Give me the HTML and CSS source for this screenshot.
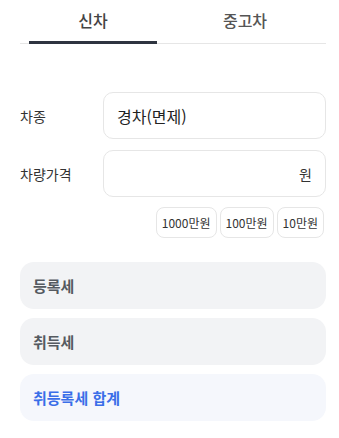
FILE: index.html
```html
<!DOCTYPE html>
<html lang="ko">
<head>
<meta charset="utf-8">
<link rel="stylesheet" href="styles.css">
</head>
<body>
<div class="page">
  <div class="tabs">
    <div class="tab active">신차</div>
    <div class="tab">중고차</div>
  </div>
  <div class="form">
    <div class="row">
      <div class="label">차종</div>
      <div class="field">경차(면제)</div>
    </div>
    <div class="row">
      <div class="label">차량가격</div>
      <div class="field field-right"><span class="unit">원</span></div>
    </div>
    <div class="quick">
      <button class="chip">1000만원</button>
      <button class="chip">100만원</button>
      <button class="chip">10만원</button>
    </div>
  </div>
  <div class="results">
    <div class="card">등록세</div>
    <div class="card">취득세</div>
    <div class="card total">취등록세 합계</div>
  </div>
</div>
</body>
</html>
```
FILE: styles.css
```css
html, body {
  margin: 0;
  padding: 0;
  background: #ffffff;
}
body {
  font-family: "Noto Sans CJK KR", "Noto Sans", sans-serif;
  color: #222;
}
.page {
  padding: 0 13px 0 20px;
}
.tabs {
  display: flex;
  height: 43px;
  border-bottom: 1px solid #e6e6e6;
  padding-left: 9px;
  gap: 24px;
}
.tab {
  width: 128px;
  height: 41px;
  line-height: 40px;
  text-align: center;
  font-size: 16px;
  font-weight: 500;
  color: #555;
  box-sizing: content-box;
  border-bottom: 3px solid transparent;
}
.tab.active {
  border-bottom-color: #2e3440;
  color: #444;
}
.form {
  margin-top: 48px;
  display: flex;
  flex-direction: column;
  gap: 11px;
}
.row {
  display: flex;
  align-items: center;
}
.label {
  width: 83px;
  font-size: 14px;
  color: #333;
}
.field {
  flex: 1;
  height: 45px;
  border: 1px solid #e6e6e6;
  border-radius: 10px;
  display: flex;
  align-items: center;
  padding: 0 13px;
  font-size: 16px;
  color: #222;
}
.field-right {
  justify-content: flex-end;
}
.unit {
  font-size: 14px;
  color: #333;
}
.quick {
  display: flex;
  justify-content: flex-end;
  gap: 3px;
  margin-top: -1px;
  padding-right: 2px;
}
.chip {
  height: 31px;
  padding: 0 5px;
  border: 1px solid #e6e6e6;
  border-radius: 8px;
  background: #fff;
  font-family: inherit;
  font-size: 12px;
  color: #333;
}
.results {
  margin-top: 24px;
  display: flex;
  flex-direction: column;
  gap: 9px;
}
.card {
  height: 47px;
  border-radius: 14px;
  background: #f2f3f5;
  display: flex;
  align-items: center;
  padding-left: 13px;
  font-size: 15px;
  font-weight: 700;
  color: #555a60;
}
.card.total {
  background: #f5f7fc;
  color: #3a6ee8;
}
```
